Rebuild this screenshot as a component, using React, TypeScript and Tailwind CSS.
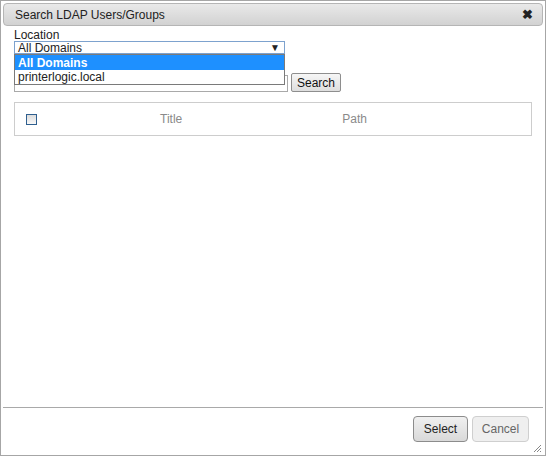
import React from 'react'

export default function App() {
  return (
    <div
      className="relative h-[456px] w-[546px] overflow-hidden border border-[#a6a6a6] bg-white text-[12px] text-[#222]"
      style={{ fontFamily: '"Liberation Sans", Arial, sans-serif' }}
    >
      {/* Title bar */}
      <div className="mx-[2px] mt-[2px] flex h-[23px] items-center justify-between rounded-[4px] border border-[#b5b5b5] bg-gradient-to-b from-[#e9e9e9] to-[#d2d2d2] pl-[11px] pr-[9px]">
        <span className="text-[12px] text-[#222]">Search LDAP Users/Groups</span>
        <span className="text-[13px] font-bold leading-none text-[#222]">✖</span>
      </div>

      {/* Body */}
      <div className="relative px-[13px] pt-[3px]">
        <div className="leading-[12px]">Location</div>
        <div className="relative w-[271px]">
          <div className="flex h-[13px] items-center justify-between border border-[#7da2ce] pl-[3px] pr-[4px] leading-none">
            <span>All Domains</span>
            <span className="text-[10px]">▼</span>
          </div>
          {/* dropdown list */}
          <div className="absolute left-0 top-[13px] z-10 w-[271px] border border-[#7a7a7a] bg-white">
            <div className="flex h-[15px] items-center bg-[#1e90ff] pl-[3px] font-bold text-white">All Domains</div>
            <div className="flex h-[14px] items-center pl-[3px]">printerlogic.local</div>
          </div>
        </div>

        <div className="mt-[19px] flex items-end gap-[3px]">
          <div className="h-[17px] w-[274px] border border-[#a9a9a9] bg-white" />
          <button className="h-[19px] rounded-[2px] border border-[#8e8e8e] bg-gradient-to-b from-[#f6f6f6] to-[#dedede] px-[5px] leading-none text-[#111]">
            Search
          </button>
        </div>

        {/* Table header */}
        <div className="mt-[10px] flex h-[34px] w-[518px] items-center border border-[#cdcdcd]">
          <div className="ml-[11px] h-[11px] w-[11px] border border-[#2f5f8f] bg-gradient-to-b from-[#dcdcdc] to-[#f8f8f8]" />
          <span className="ml-[123px] text-[#8a8a8a]">Title</span>
          <span className="ml-[160px] text-[#8a8a8a]">Path</span>
        </div>
      </div>

      {/* Footer */}
      <div className="absolute bottom-0 left-[2px] right-[2px] h-[48px] border-t border-[#a9a9a9]">
        <div className="mr-[14px] mt-[8px] flex justify-end gap-[4px]">
          <button className="h-[26px] w-[55px] rounded-[4px] border border-[#8c8c8c] bg-gradient-to-b from-[#f0f0f0] to-[#d9d9d9] text-[12px] text-[#222]">
            Select
          </button>
          <button className="h-[26px] w-[57px] rounded-[4px] border border-[#cfcfcf] bg-[#efefef] text-[12px] text-[#666]">
            Cancel
          </button>
        </div>
        <svg className="absolute bottom-[2px] right-[1px]" width="9" height="9" viewBox="0 0 9 9">
          <path d="M8 1L1 8M8 4L4 8M8 7L7 8" stroke="#888" strokeWidth="1" />
        </svg>
      </div>
    </div>
  )
}
